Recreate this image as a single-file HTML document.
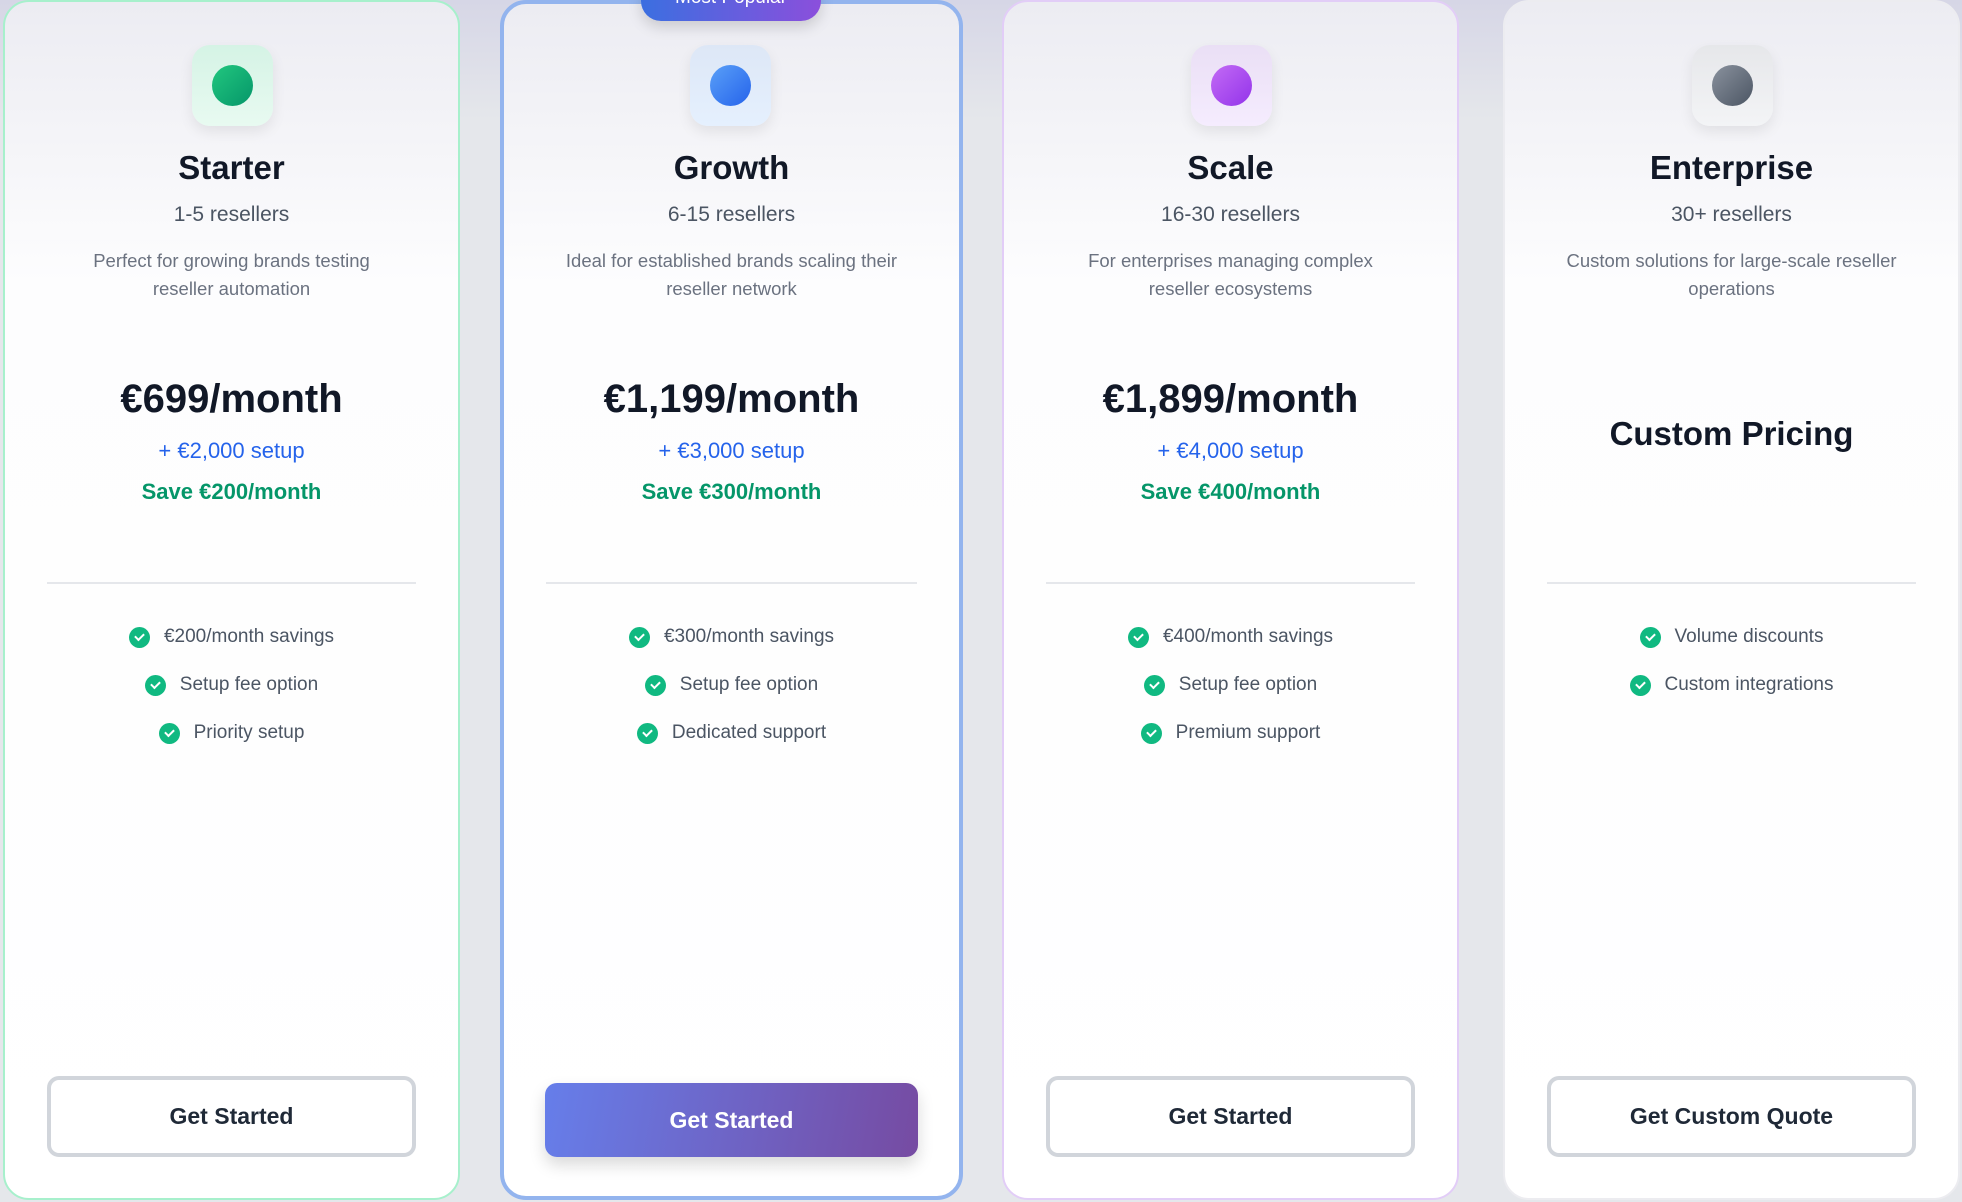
<!DOCTYPE html>
<html><head><meta charset="utf-8"><style>
*{box-sizing:border-box;margin:0;padding:0}
body{width:1962px;height:1202px;overflow:hidden;background:linear-gradient(#d6d6e6 0,#e5e7eb 120px,#e5e7eb 100%);font-family:"Liberation Sans",sans-serif;position:relative}
.card{position:absolute;top:0;height:1200px;width:457px;background:linear-gradient(#ececf2 0,#fdfdfe 280px,#fff 100%);border-radius:26px;border:2px solid;text-align:center}
.c1{left:3px;border-color:#a7f0cc}
.c2{left:500px;width:463px;border:4px solid #93b4ee;top:0}
.c3{left:1002px;border-color:#e2cdf7}
.c4{left:1503px;border-color:#ececf0}
.icon{position:absolute;left:50%;margin-left:-40px;top:43px;width:81px;height:81px;border-radius:18px;box-shadow:0 6px 14px rgba(0,0,0,.08)}
.icon i{position:absolute;left:20px;top:20px;width:41px;height:41px;border-radius:50%}
h2{position:absolute;top:147px;width:100%;font-size:33px;font-weight:bold;color:#111827}
.res{position:absolute;top:201px;width:100%;font-size:21px;color:#4b5563}
.desc{position:absolute;top:245px;left:62px;right:62px;font-size:18.5px;line-height:28px;color:#6b7280}
.price{position:absolute;top:375px;width:100%;font-size:40px;font-weight:bold;color:#111827}
.setup{position:absolute;top:436px;width:100%;font-size:22px;color:#2563eb}
.save{position:absolute;top:477px;width:100%;font-size:22px;font-weight:bold;color:#059669}
.hr{position:absolute;top:580px;left:42px;right:42px;height:2px;background:#e5e7eb}
ul{position:absolute;top:621px;width:100%;list-style:none}
li{height:48px;font-size:19px;color:#4b5563;display:flex;justify-content:center;align-items:flex-start;line-height:28px}
li b{display:inline-block;width:21px;height:21px;border-radius:50%;background:#10b981;margin:4px 14px 0 0;position:relative}
li b:after{content:"";position:absolute;left:6px;top:6px;width:7px;height:4px;border-left:2px solid #fff;border-bottom:2px solid #fff;transform:rotate(-45deg)}
.btn{position:absolute;left:42px;right:42px;top:1074px;height:81px;border:4px solid #d1d5db;border-radius:12px;background:#fff;font-size:23px;font-weight:bold;color:#1f2937;line-height:73px}
.c2 .btn{left:41px;right:41px;top:1079px;height:74px;border:none;background:linear-gradient(100deg,#667eea,#764ba2);color:#fff;line-height:74px;box-shadow:0 8px 16px rgba(0,0,0,.15)}
.badge{position:absolute;left:641px;top:-20px;width:180px;height:41px;border-radius:20px;background:linear-gradient(90deg,#3b6fe0,#8b4fdc);color:#fff;font-size:19px;text-align:center;line-height:36px;box-shadow:0 6px 14px rgba(0,0,0,.15)}
</style></head><body>
<div class="card c1">
<div class="icon" style="background:linear-gradient(#d5f3e5,#e8faf1)"><i style="background:linear-gradient(135deg,#22c77f,#059669)"></i></div>
<h2>Starter</h2><div class="res">1-5 resellers</div>
<div class="desc">Perfect for growing brands testing reseller automation</div>
<div class="price">€699/month</div><div class="setup">+ €2,000 setup</div><div class="save">Save €200/month</div>
<div class="hr"></div>
<ul><li><b></b>€200/month savings</li><li><b></b>Setup fee option</li><li><b></b>Priority setup</li></ul>
<div class="btn">Get Started</div></div>
<div class="card c2">
<div class="icon" style="margin-left:-42px;top:41px;background:linear-gradient(#dde7f6,#e5f0fe)"><i style="background:linear-gradient(135deg,#5aa0f8,#2563eb)"></i></div>
<h2 style="top:145px">Growth</h2><div class="res" style="top:199px">6-15 resellers</div>
<div class="desc" style="top:243px;left:55px;right:55px">Ideal for established brands scaling their reseller network</div>
<div class="price" style="top:373px">€1,199/month</div><div class="setup" style="top:434px">+ €3,000 setup</div><div class="save" style="top:475px">Save €300/month</div>
<div class="hr" style="top:578px"></div>
<ul style="top:619px"><li><b></b>€300/month savings</li><li><b></b>Setup fee option</li><li><b></b>Dedicated support</li></ul>
<div class="btn">Get Started</div></div>
<div class="card c3">
<div class="icon" style="background:linear-gradient(#eadff5,#f5ecfe)"><i style="background:linear-gradient(135deg,#c36bf5,#9333ea)"></i></div>
<h2>Scale</h2><div class="res">16-30 resellers</div>
<div class="desc" style="left:68px;right:68px">For enterprises managing complex reseller ecosystems</div>
<div class="price">€1,899/month</div><div class="setup">+ €4,000 setup</div><div class="save">Save €400/month</div>
<div class="hr"></div>
<ul><li><b></b>€400/month savings</li><li><b></b>Setup fee option</li><li><b></b>Premium support</li></ul>
<div class="btn">Get Started</div></div>
<div class="card c4">
<div class="icon" style="background:linear-gradient(#e6e7ea,#f3f4f6)"><i style="background:linear-gradient(135deg,#8a929e,#4b5563)"></i></div>
<h2>Enterprise</h2><div class="res">30+ resellers</div>
<div class="desc" style="left:40px;right:40px">Custom solutions for large-scale reseller operations</div>
<div class="price" style="top:413px;font-size:33px">Custom Pricing</div>
<div class="hr"></div>
<ul><li><b></b>Volume discounts</li><li><b></b>Custom integrations</li></ul>
<div class="btn">Get Custom Quote</div></div>
<div class="badge">Most Popular</div>
</body></html>
